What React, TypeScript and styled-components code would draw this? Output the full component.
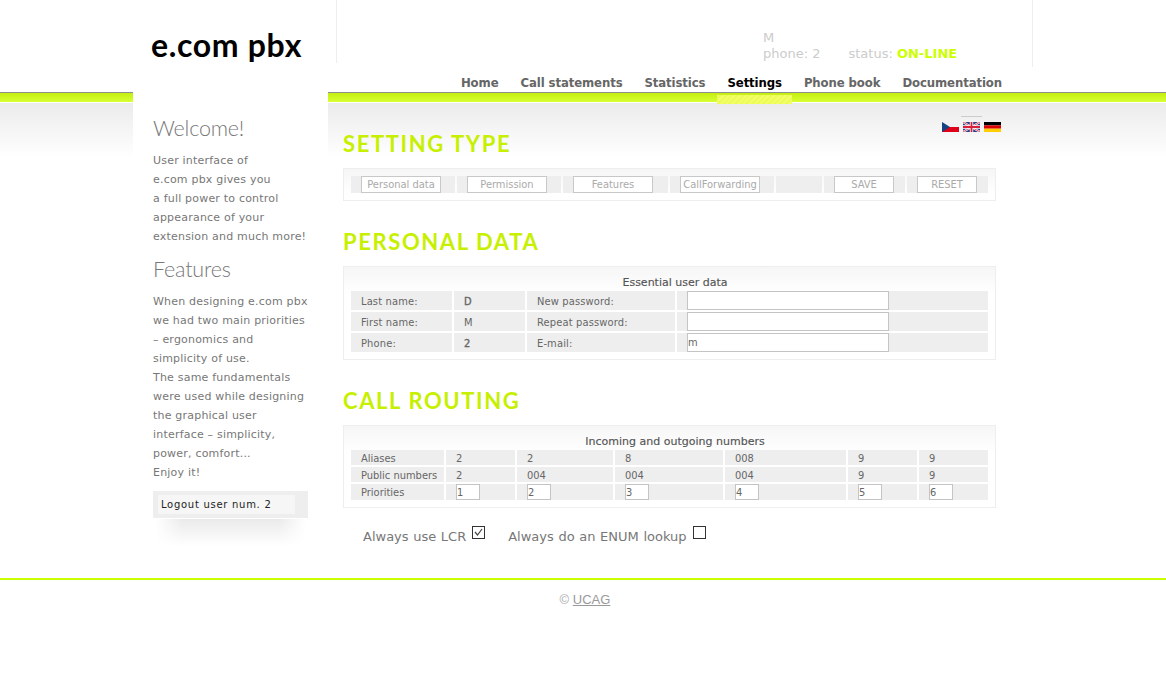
import React from "react";
import styled, { createGlobalStyle } from "styled-components";

const Global = createGlobalStyle`
  html, body { margin: 0; padding: 0; background: #fff; }
  body { font-family: "DejaVu Sans", Verdana, sans-serif; color: #666; }
`;

const Page = styled.div`
  width: 1166px;
  min-height: 691px;
  background: #fff;
`;
const Wrap = styled.div`
  width: 900px;
  margin: 0 auto;
`;
const Header = styled.header`
  height: 92px;
`;
const HeaderTop = styled.div`
  display: flex;
  height: 67px;
`;
const LogoBox = styled.div`
  width: 204px;
  height: 63px;
  box-sizing: border-box;
  border-right: 1px solid #eee;
  padding: 26px 0 0 18px;
`;
const Logo = styled.div`
  font-family: Lato, sans-serif;
  font-weight: 700;
  font-size: 32px;
  line-height: 38px;
  color: #000;
  letter-spacing: 0.65px;
`;
const StatusBox = styled.div`
  width: 696px;
  box-sizing: border-box;
  border-right: 1px solid #eee;
  padding: 30px 0 0 426px;
  font-size: 13px;
  line-height: 16px;
  color: #ccc;
`;
const StatusRow = styled.div`
  display: flex;
  gap: 28px;
`;
const Online = styled.b`
  color: #ccff00;
`;
const Nav = styled.nav`
  display: flex;
  justify-content: flex-end;
  gap: 22px;
  padding-right: 31px;
  height: 25px;
`;
const NavLink = styled.a<{ $active?: boolean }>`
  display: block;
  position: relative;
  font-family: "DejaVu Sans Condensed", "DejaVu Sans", sans-serif;
  font-size: 13px;
  font-weight: 700;
  line-height: 31px;
  letter-spacing: -0.1px;
  color: ${(p) => (p.$active ? "#000" : "#666")};
  ${(p) =>
    p.$active &&
    `&::after {
      content: "";
      position: absolute;
      left: -10px;
      right: -10px;
      top: 28px;
      height: 9px;
      background: repeating-linear-gradient(135deg, #f2ff66 0 2px, #ebfc55 2px 4px);
    }`}
`;
const Main = styled.main`
  height: 486px;
  background: linear-gradient(
    to bottom,
    #8f8f8f 0 1px,
    #c4ee10 1px,
    #d8ff33 10px,
    #fff 10px 11px,
    #ebebeb 11px,
    #fff 65px
  );
`;
const Columns = styled(Wrap)`
  display: flex;
  height: 100%;
`;
const Sidebar = styled.aside`
  width: 195px;
  box-sizing: border-box;
  background: #fff;
  padding: 23px 20px 0;
`;
const SideTitle = styled.h2`
  margin: 0 0 10px;
  font-family: Lato, sans-serif;
  font-weight: 300;
  font-size: 21.5px;
  line-height: 26px;
  color: #777;
  letter-spacing: -0.2px;
`;
const SideText = styled.p`
  margin: 0 0 10px;
  font-size: 11px;
  line-height: 19px;
  letter-spacing: 0.2px;
  color: #777;
  white-space: nowrap;
`;
const LogoutBox = styled.div`
  position: relative;
  width: 155px;
  height: 27px;
  margin-top: -1px;
  box-sizing: border-box;
  padding: 4px 13px 0 5px;
  background: #eee;
  &::after {
    content: "";
    position: absolute;
    left: 2px;
    right: 2px;
    top: 28px;
    height: 27px;
    background: linear-gradient(to bottom, #eaeaea, #fff);
    mask-image: linear-gradient(to right, transparent, #000 18%, #000 82%, transparent);
  }
`;
const Logout = styled.div`
  height: 19px;
  background: #f6f6f6;
  padding-left: 3px;
  font-size: 10px;
  line-height: 19px;
  letter-spacing: 0.72px;
  color: #222;
`;
const Content = styled.div`
  width: 658px;
  padding: 24px 0 0 15px;
`;
const Flags = styled.div`
  display: flex;
  justify-content: flex-end;
  gap: 4px;
  height: 12px;
`;
const FlagLink = styled.a<{ $active?: boolean }>`
  display: block;
  height: 10px;
  padding-top: 6px;
  position: relative;
  ${(p) =>
    p.$active &&
    `&::before {
      content: "";
      position: absolute;
      top: 0;
      left: -2px;
      right: -2px;
      height: 1px;
      background: #ccc;
    }`}
`;
const SectionTitle = styled.h1`
  margin: 0 0 9px;
  padding-top: 1px;
  font-family: Lato, sans-serif;
  font-weight: 700;
  font-size: 22px;
  line-height: 30px;
  letter-spacing: 1.6px;
  color: #c6f000;
`;
const Panel = styled.section<{ $height: number }>`
  width: 653px;
  height: ${(p) => p.$height}px;
  box-sizing: border-box;
  border: 1px solid #eee;
  padding: 7px;
  margin-bottom: 25px;
  background: linear-gradient(to bottom, #f6f6f6, #fff 26px);
`;
const PanelTitle = styled.div`
  height: 17px;
  padding-left: 11px;
  text-align: center;
  font-family: "DejaVu Sans", sans-serif;
  font-size: 11px;
  line-height: 17px;
  color: #555;
  -webkit-text-stroke: 0.15px #555;
`;
const Grid = styled.div<{ $cols: string; $rows: string; $spacing?: number }>`
  display: grid;
  grid-template-columns: ${(p) => p.$cols};
  grid-template-rows: ${(p) => p.$rows};
  gap: 2px;
  letter-spacing: ${(p) => p.$spacing ?? 0}px;
`;
const ControlCell = styled.div`
  background: #eee;
  padding-left: 10px;
  display: flex;
  align-items: center;
`;
const Cell = styled(ControlCell)<{ $strong?: boolean }>`
  padding-top: 1px;
  font-family: "DejaVu Sans Condensed", "DejaVu Sans", sans-serif;
  font-size: 11px;
  color: #666;
  white-space: nowrap;
  -webkit-text-stroke: ${(p) => (p.$strong ? "0.35px #666" : "0")};
`;
const ActionButton = styled.button`
  width: 80px;
  height: 17px;
  box-sizing: border-box;
  padding: 1px 0 0;
  background: #fff;
  border: 1px solid #c8c8c8;
  font-family: "DejaVu Sans Condensed", "DejaVu Sans", sans-serif;
  font-size: 11px;
  line-height: 14px;
  color: #aaa;
`;
const NarrowButton = styled(ActionButton)`
  width: 60px;
`;
const TextInput = styled.input`
  width: 202px;
  height: 19px;
  box-sizing: border-box;
  padding: 0;
  background: #fff;
  border: 1px solid #c4c4c4;
  font-family: "DejaVu Sans Condensed", "DejaVu Sans", sans-serif;
  font-size: 11px;
  color: #666;
`;
const PriorityInput = styled(TextInput)`
  width: 24px;
  height: 16px;
`;
const Options = styled.div`
  display: flex;
  align-items: flex-start;
  padding: 0 0 0 20px;
  margin-top: -7px;
  font-size: 13px;
  line-height: 16px;
  word-spacing: 0.5px;
  color: #777;
`;
const OptionLabel = styled.label`
  display: flex;
  gap: 6px;
  margin-right: 23px;
`;
const OptionText = styled.span`
  padding-top: 3px;
`;
const CheckBox = styled.span`
  display: block;
  width: 13px;
  height: 13px;
  box-sizing: border-box;
  border: 1px solid #333;
  background: #fff;
`;
const Footer = styled.footer`
  border-top: 2px solid #ccff00;
  padding: 12px 0 0 4px;
  text-align: center;
  font-family: "Liberation Sans", Arial, sans-serif;
  font-size: 13px;
  line-height: 15px;
  color: #aaa;
`;
const FooterLink = styled.a`
  color: #999;
  text-decoration: underline;
`;

const CzFlag = () => (
  <svg width="17" height="10" viewBox="0 0 17 10" style={{ display: "block" }}>
    <rect width="17" height="5" fill="#f1f1f1" />
    <rect y="5" width="17" height="5" fill="#e0001a" />
    <path d="M0 0 L8 5 L0 10 Z" fill="#14437f" />
  </svg>
);
const GbFlag = () => (
  <svg width="17" height="10" viewBox="0 0 17 10" style={{ display: "block" }}>
    <rect width="17" height="10" fill="#2a3f86" />
    <path d="M0 0 L17 10 M17 0 L0 10" stroke="#fff" strokeWidth="2" />
    <path d="M0 0 L17 10 M17 0 L0 10" stroke="#d8203a" strokeWidth="0.8" />
    <path d="M8.5 0 V10 M0 5 H17" stroke="#fff" strokeWidth="3.4" />
    <path d="M8.5 0 V10 M0 5 H17" stroke="#d8203a" strokeWidth="1.8" />
  </svg>
);
const DeFlag = () => (
  <svg width="17" height="10" viewBox="0 0 17 10" style={{ display: "block" }}>
    <rect width="17" height="3.4" fill="#000" />
    <rect y="3.4" width="17" height="3.3" fill="#dd0000" />
    <rect y="6.7" width="17" height="3.3" fill="#ffce00" />
  </svg>
);
const Check = () => (
  <svg width="11" height="11" viewBox="0 0 11 11" style={{ display: "block" }}>
    <path d="M2 5 L4.5 8 L9 2" fill="none" stroke="#444" strokeWidth="1.2" />
  </svg>
);

const navItems = ["Home", "Call statements", "Statistics", "Settings", "Phone book", "Documentation"];
const routingCols = "93px 69px 96px 108px 121px 69px 69px";

const routing = [
  ["Aliases", "2", "2", "8", "008", "9", "9"],
  ["Public numbers", "2", "004", "004", "004", "9", "9"],
];

export default function App() {
  return (
    <Page>
      <Global />
      <Header>
        <Wrap>
          <HeaderTop>
            <LogoBox>
              <Logo>e.com pbx</Logo>
            </LogoBox>
            <StatusBox>
              <div>M</div>
              <StatusRow>
                <span>phone: 2</span>
                <span>
                  status: <Online>ON-LINE</Online>
                </span>
              </StatusRow>
            </StatusBox>
          </HeaderTop>
          <Nav>
            {navItems.map((n) => (
              <NavLink key={n} $active={n === "Settings"}>
                {n}
              </NavLink>
            ))}
          </Nav>
        </Wrap>
      </Header>
      <Main>
        <Columns>
          <Sidebar>
            <SideTitle>Welcome!</SideTitle>
            <SideText>
              User interface of
              <br />
              e.com pbx gives you
              <br />
              a full power to control
              <br />
              appearance of your
              <br />
              extension and much more!
            </SideText>
            <SideTitle>Features</SideTitle>
            <SideText>
              When designing e.com pbx
              <br />
              we had two main priorities
              <br />
              – ergonomics and
              <br />
              simplicity of use.
              <br />
              The same fundamentals
              <br />
              were used while designing
              <br />
              the graphical user
              <br />
              interface – simplicity,
              <br />
              power, comfort...
              <br />
              Enjoy it!
            </SideText>
            <LogoutBox>
              <Logout>Logout user num. 2</Logout>
            </LogoutBox>
          </Sidebar>
          <Content>
            <Flags>
              <FlagLink>
                <CzFlag />
              </FlagLink>
              <FlagLink $active>
                <GbFlag />
              </FlagLink>
              <FlagLink>
                <DeFlag />
              </FlagLink>
            </Flags>
            <SectionTitle>SETTING TYPE</SectionTitle>
            <Panel $height={33}>
              <Grid $cols="104px 104px 105px 104px 46px 81px 81px" $rows="17px">
                <ControlCell><ActionButton>Personal data</ActionButton></ControlCell>
                <ControlCell><ActionButton>Permission</ActionButton></ControlCell>
                <ControlCell><ActionButton>Features</ActionButton></ControlCell>
                <ControlCell><ActionButton>CallForwarding</ActionButton></ControlCell>
                <ControlCell />
                <ControlCell><NarrowButton>SAVE</NarrowButton></ControlCell>
                <ControlCell><NarrowButton>RESET</NarrowButton></ControlCell>
              </Grid>
            </Panel>
            <SectionTitle>PERSONAL DATA</SectionTitle>
            <Panel $height={94}>
              <PanelTitle>Essential user data</PanelTitle>
              <Grid $cols="101px 71px 148px 311px" $rows="19px 19px 19px" $spacing={0.15}>
                <Cell>Last name:</Cell>
                <Cell $strong>D</Cell>
                <Cell>New password:</Cell>
                <ControlCell><TextInput readOnly type="text" value="" /></ControlCell>
                <Cell>First name:</Cell>
                <Cell>M</Cell>
                <Cell>Repeat password:</Cell>
                <ControlCell><TextInput readOnly type="text" value="" /></ControlCell>
                <Cell>Phone:</Cell>
                <Cell $strong>2</Cell>
                <Cell>E-mail:</Cell>
                <ControlCell><TextInput readOnly type="text" value="m" /></ControlCell>
              </Grid>
            </Panel>
            <SectionTitle>CALL ROUTING</SectionTitle>
            <Panel $height={83}>
              <PanelTitle>Incoming and outgoing numbers</PanelTitle>
              <Grid $cols={routingCols} $rows="15px 15px 16px">
                {routing.flat().map((v, i) => (
                  <Cell key={i}>{v}</Cell>
                ))}
                <Cell>Priorities</Cell>
                {[1, 2, 3, 4, 5, 6].map((v) => (
                  <ControlCell key={v}>
                    <PriorityInput readOnly type="text" value={v} />
                  </ControlCell>
                ))}
              </Grid>
            </Panel>
            <Options>
              <OptionLabel>
                <OptionText>Always use LCR</OptionText>
                <CheckBox><Check /></CheckBox>
              </OptionLabel>
              <OptionLabel>
                <OptionText>Always do an ENUM lookup</OptionText>
                <CheckBox />
              </OptionLabel>
            </Options>
          </Content>
        </Columns>
      </Main>
      <Footer>
        © <FooterLink>UCAG</FooterLink>
      </Footer>
    </Page>
  );
}
